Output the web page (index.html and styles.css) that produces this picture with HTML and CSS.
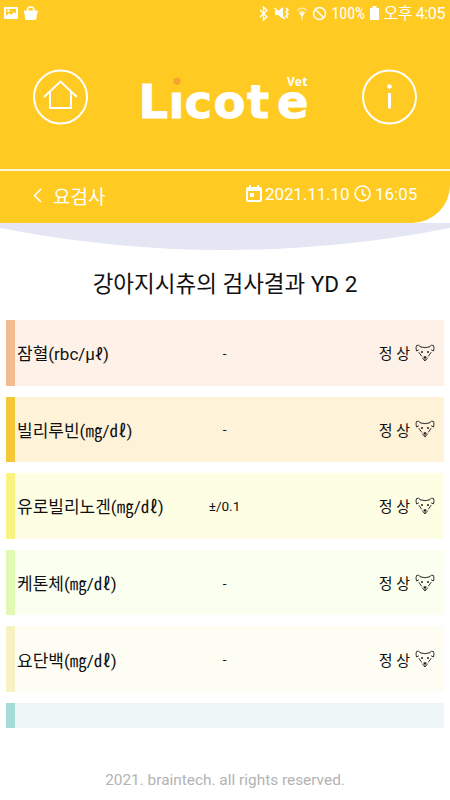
FILE: index.html
```html
<!DOCTYPE html>
<html lang="ko">
<head>
    <meta charset="UTF-8">
    <meta name="viewport" content="width=device-width, initial-scale=1.0">
    <title>Licote Vet</title>
    <link rel="stylesheet" href="styles.css">
</head>
<body>

    <!-- 아이콘 정의 -->
    <svg class="defs" width="0" height="0">
        <symbol id="dog" viewBox="0 0 20 18">
            <g fill="none" stroke="#333" stroke-width="1" stroke-linecap="round" stroke-linejoin="round">
                <path d="M6 3 Q10 4.500 14 3 M6 3 Q3 0 1.500 1.500 Q.5 3.500 1.500 7 L3.500 6 M14 3 Q17 0 18.500 1.500 Q19.500 3.500 18.500 7 L16.500 6"/>
                <path d="M4 8.500 L6.500 12 M16 8.500 L13.500 12 M7.500 14 L10 17 12.500 14 M10 13 V15.500"/>
            </g>
            <circle cx="7" cy="8" r="1" fill="#222"/>
            <circle cx="13" cy="8" r="1" fill="#222"/>
            <ellipse cx="10" cy="13.300" rx="1.600" ry="1" fill="#222"/>
        </symbol>
    </svg>

    <!-- 상단 영역 -->
    <header class="header">
        <div class="status-bar">
            <svg class="status-left" width="36" height="16" viewBox="0 0 36 16">
                <path fill="#fff" fill-rule="evenodd" d="M1 1h12q1 0 1 1v10q0 1-1 1H1q-1 0-1-1V2q0-1 1-1zM2 3v7l3-3 2 2 3-3 2 2V3z"/>
                <circle cx="4.500" cy="4.800" r="1.300" fill="#fff"/>
                <path fill="#fff" d="M20 4.500h13.500v3h-.5l-.7 5.500q-.2 1-1.200 1h-8.700q-1 0-1.200-1l-.7-5.500h-.5z"/>
                <path fill="none" stroke="#fff" stroke-width="1.600" d="M23.500 5V4q0-3 3.200-3t3.200 3v1"/>
            </svg>
            <div class="status-right">
                <svg width="69" height="16" viewBox="0 0 69 16" fill="none" stroke="#fff">
                    <path stroke-width="1.400" d="M1 4l7 7-3.500 3V1L8 4.300 1 11"/>
                    <path fill="#fff" stroke="none" d="M16 5h3l5-4v12l-5-4h-3z"/>
                    <path stroke-width="1.500" d="M15.500 2L26 13M27 2l2 2-2 2 2 2-2 2 2 2"/>
                    <path stroke-width="1.200" opacity=".6" d="M38 4.500q5-4.500 10 0M39.700 7q3.300-3 6.600 0"/>
                    <path fill="#fff" stroke="none" d="M40.500 7.500q2.500-2 5 0L43 11z"/>
                    <path stroke-width="1.500" opacity=".6" d="M43 10v4"/>
                    <circle cx="60.500" cy="7.500" r="6" stroke-width="1.500"/>
                    <path stroke-width="1.500" d="M56.500 3.500l8 8"/>
                </svg>
                <span class="battery-text">100%</span>
                <svg class="battery" width="9" height="14" viewBox="0 0 9 14"><path fill="#fff" d="M0 2h2.500V0h4v2H9v12H0z"/></svg>
                <span class="clock">오후 4:05</span>
            </div>
        </div>

        <div class="brand-bar">
            <svg class="round-icon" width="56" height="56" viewBox="0 0 56 56" fill="none" stroke="#fff" stroke-width="2">
                <circle cx="28.500" cy="28" r="26.500"/>
                <path d="M12 28L28.500 12.500 45 28M18 23v16h21V23"/>
            </svg>
            <svg class="logo" width="180" height="76" viewBox="135 60 180 76">
                <text class="logo-text" x="138.500 168.500 184.500 213.500 247 277" y="118">Licote</text>
                <rect x="170" y="74" width="14" height="17" fill="#ffca22"/>
                <circle cx="177" cy="81.300" r="3.700" fill="#f8a530"/>
                <text class="logo-sub" x="287" y="85.500" textLength="20.500">Vet</text>
            </svg>
            <svg class="round-icon" width="56" height="56" viewBox="0 0 56 56" fill="none" stroke="#fff" stroke-width="2">
                <circle cx="27.500" cy="28" r="26.500"/>
                <circle cx="27.500" cy="17.500" r="2.300" fill="#fff" stroke="none"/>
                <path stroke-width="3" d="M27.500 24v15.500"/>
            </svg>
        </div>

        <div class="title-bar">
            <svg class="back" width="9" height="15" viewBox="0 0 9 15"><path fill="none" stroke="#fff" stroke-width="1.600" d="M8 1L1.500 7.500 8 14"/></svg>
            <h1>요검사</h1>
            <svg class="calendar" width="16" height="17" viewBox="0 0 16 17">
                <path fill="#fff" fill-rule="evenodd" d="M2 2h1V0h2v2h6V0h2v2h1q2 0 2 2v11q0 2-2 2H2q-2 0-2-2V4q0-2 2-2zM2 6v9h12V6z"/>
                <path fill="#fff" d="M4 8h4v4H4z"/>
            </svg>
            <span class="date">2021.11.10</span>
            <svg class="time-icon" width="17" height="17" viewBox="0 0 17 17" fill="none" stroke="#fff" stroke-width="1.600">
                <circle cx="8.500" cy="8.500" r="7.500"/>
                <path d="M8.500 4v5l3.500 2"/>
            </svg>
            <span class="time">16:05</span>
        </div>
    </header>

    <svg class="curve" width="450" height="28" viewBox="0 0 450 28"><path fill="#e4e6f4" d="M0 0H450V5Q337 27 225 27T0 5z"/></svg>

    <!-- 검사 결과 -->
    <h2 class="result-title">강아지시츄의 검사결과 YD 2</h2>

    <main class="results">
        <div class="row blood">
            <span class="name">잠혈(rbc/μℓ)</span>
            <span class="value">-</span>
            <span class="state">정 상 <svg class="dog"><use href="#dog"/></svg></span>
        </div>
        <div class="row bilirubin">
            <span class="name">빌리루빈(㎎/㎗)</span>
            <span class="value">-</span>
            <span class="state">정 상 <svg class="dog"><use href="#dog"/></svg></span>
        </div>
        <div class="row urobilinogen">
            <span class="name">유로빌리노겐(㎎/㎗)</span>
            <span class="value">±/0.1</span>
            <span class="state">정 상 <svg class="dog"><use href="#dog"/></svg></span>
        </div>
        <div class="row ketone">
            <span class="name">케톤체(㎎/㎗)</span>
            <span class="value">-</span>
            <span class="state">정 상 <svg class="dog"><use href="#dog"/></svg></span>
        </div>
        <div class="row protein">
            <span class="name">요단백(㎎/㎗)</span>
            <span class="value">-</span>
            <span class="state">정 상 <svg class="dog"><use href="#dog"/></svg></span>
        </div>
        <div class="row nitrite"></div>
    </main>

    <footer>2021. braintech. all rights reserved.</footer>

</body>
</html>
```
FILE: styles.css
```css
/* Global */
* {
    margin: 0;
    padding: 0;
    box-sizing: border-box;
}

body {
    width: 450px;
    height: 800px;
    overflow: hidden;
    background: #fff;
    font-family: Roboto, "Noto Sans CJK KR", sans-serif;
    color: #111;
}

svg {
    display: block;
    flex-shrink: 0;
}

.defs {
    height: 0;
}

/* Header */
.header {
    height: 223px;
    background: #ffca22;
    border-bottom-right-radius: 38px;
    color: #fff;
}

.status-bar {
    display: flex;
    justify-content: space-between;
    height: 28px;
    padding: 6px 5px 0 4px;
    line-height: 16px;
}

.status-right {
    display: flex;
}

.battery-text {
    margin-left: 4px;
    width: 34px;
    font-family: "Roboto Condensed", Roboto, sans-serif;
    font-size: 16px;
    letter-spacing: -0.1px;
    white-space: nowrap;
}

.battery {
    margin: 0 5px 0 4px;
}

.clock {
    font-size: 16px;
    letter-spacing: -0.4px;
    white-space: nowrap;
}

.brand-bar {
    display: flex;
    justify-content: space-between;
    height: 141px;
    padding: 41px 32px 0;
}

.logo {
    margin-top: -9px;
}

.logo-text {
    fill: #fff;
    stroke: #fff;
    stroke-width: 0.8px;
    font-family: "DejaVu Sans", sans-serif;
    font-size: 46.5px;
    font-weight: 700;
}

.logo-sub {
    fill: #fff;
    font-family: "Noto Sans", sans-serif;
    font-size: 12px;
    font-weight: 700;
}

.title-bar {
    display: flex;
    align-items: center;
    height: 53px;
    padding: 0 34px 3px 33px;
    border-top: 2px solid #fff6da;
}

.title-bar h1 {
    margin: 0 auto 0 11px;
    font-size: 19px;
    font-weight: 400;
}

.calendar,
.time-icon,
.date,
.time {
    margin-bottom: 3px;
}

.date,
.time {
    font-size: 17px;
    line-height: 20px;
    white-space: nowrap;
}

.date {
    width: 84px;
    margin-left: 3px;
    margin-right: 5px;
    letter-spacing: -0.1px;
}

.time {
    width: 41px;
    margin-left: 4px;
}

/* Results */
.result-title {
    height: 69px;
    padding-top: 16px;
    font-size: 22.5px;
    font-weight: 400;
    line-height: 34px;
    text-align: center;
}

.results {
    display: flex;
    flex-direction: column;
    gap: 11px;
    height: 408px;
    padding: 0 6px;
    overflow: hidden;
}

.row {
    display: grid;
    grid-template-columns: 166px 80px 1fr;
    align-items: center;
    flex: 0 0 65.6px;
    padding: 0 9px 0 2px;
    border-left: 9px solid;
}

.name {
    font-size: 17px;
    white-space: nowrap;
}

.value {
    padding-left: 3px;
    font-size: 13.5px;
    text-align: center;
}

.state {
    display: flex;
    justify-content: flex-end;
    align-items: center;
    gap: 5px;
    font-size: 15px;
}

.dog {
    width: 20px;
    height: 18px;
}

.blood {
    background: #fdf1e8;
    border-color: #f4bd90;
}

.bilirubin {
    background: #fef2d8;
    border-color: #f5c838;
}

.urobilinogen {
    background: #fefee5;
    border-color: #faf383;
}

.ketone {
    background: #fafff0;
    border-color: #e2f9b4;
}

.protein {
    background: #fdfdf3;
    border-color: #f7f1c3;
}

.nitrite {
    background: #edf6f5;
    border-color: #a5dad6;
}

footer {
    padding-top: 42px;
    color: #b3b3b3;
    font-size: 15.4px;
    line-height: 20px;
    text-align: center;
}
```
